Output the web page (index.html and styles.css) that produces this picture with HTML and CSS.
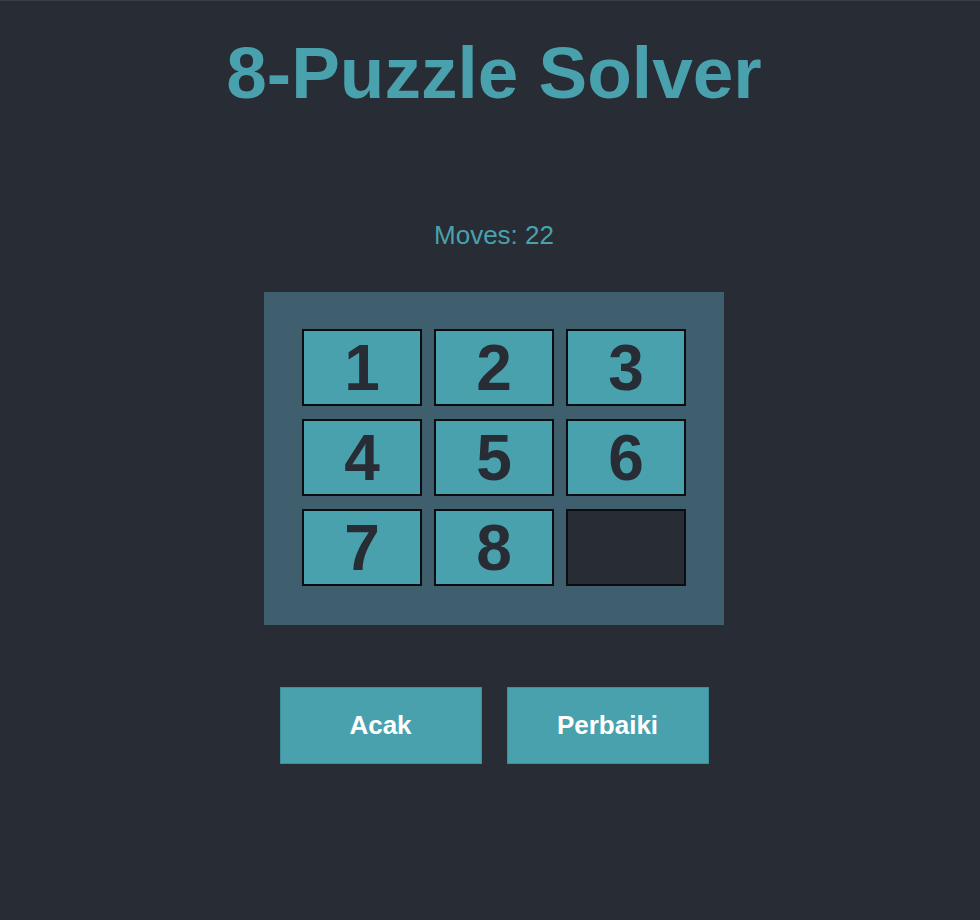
FILE: index.html
```html
<!DOCTYPE html>
<html>
<head>
<meta charset="utf-8">
<link rel="stylesheet" href="styles.css">
</head>
<body>
<div class="app">
  <h1 class="title">8-Puzzle Solver</h1>
  <div class="moves">Moves: 22</div>
  <div class="board">
    <div class="tile">1</div>
    <div class="tile">2</div>
    <div class="tile">3</div>
    <div class="tile">4</div>
    <div class="tile">5</div>
    <div class="tile">6</div>
    <div class="tile">7</div>
    <div class="tile">8</div>
    <div class="tile empty"></div>
  </div>
  <div class="controls">
    <button class="btn">Acak</button>
    <button class="btn">Perbaiki</button>
  </div>
</div>
</body>
</html>
```

FILE: styles.css
```css
html, body {
  margin: 0;
  padding: 0;
  background: #282c34;
  height: 100%;
}
body {
  border-top: 1px solid #3b3f48;
  box-sizing: border-box;
  padding-left: 8px;
  font-family: "Liberation Sans", Arial, sans-serif;
}
.app {
  display: flex;
  flex-direction: column;
  align-items: center;
}
.title {
  margin: 30px 0 0;
  font-size: 73px;
  font-weight: bold;
  color: #4aa1ae;
  line-height: normal;
}
.moves {
  margin-top: 106px;
  font-size: 26px;
  color: #4aa1ae;
}
.board {
  margin-top: 41px;
  background: #3f5f6e;
  padding: 37px 38px 39px;
  display: grid;
  grid-template-columns: repeat(3, 120px);
  grid-template-rows: repeat(3, 77px);
  column-gap: 12px;
  row-gap: 13px;
}
.tile {
  box-sizing: border-box;
  border: 2px solid #0b0d10;
  background: #4aa1ae;
  color: #282c34;
  font-size: 64px;
  font-weight: bold;
  display: flex;
  align-items: center;
  justify-content: center;
}
.tile.empty {
  background: #282c34;
}
.controls {
  margin-top: 62px;
  display: flex;
  gap: 25px;
}
.btn {
  width: 202px;
  height: 77px;
  background: #4aa1ae;
  border: 1px solid #3d8f9b;
  color: #ffffff;
  font-family: "Liberation Sans", Arial, sans-serif;
  font-size: 26px;
  font-weight: bold;
  padding: 0;
}
```
